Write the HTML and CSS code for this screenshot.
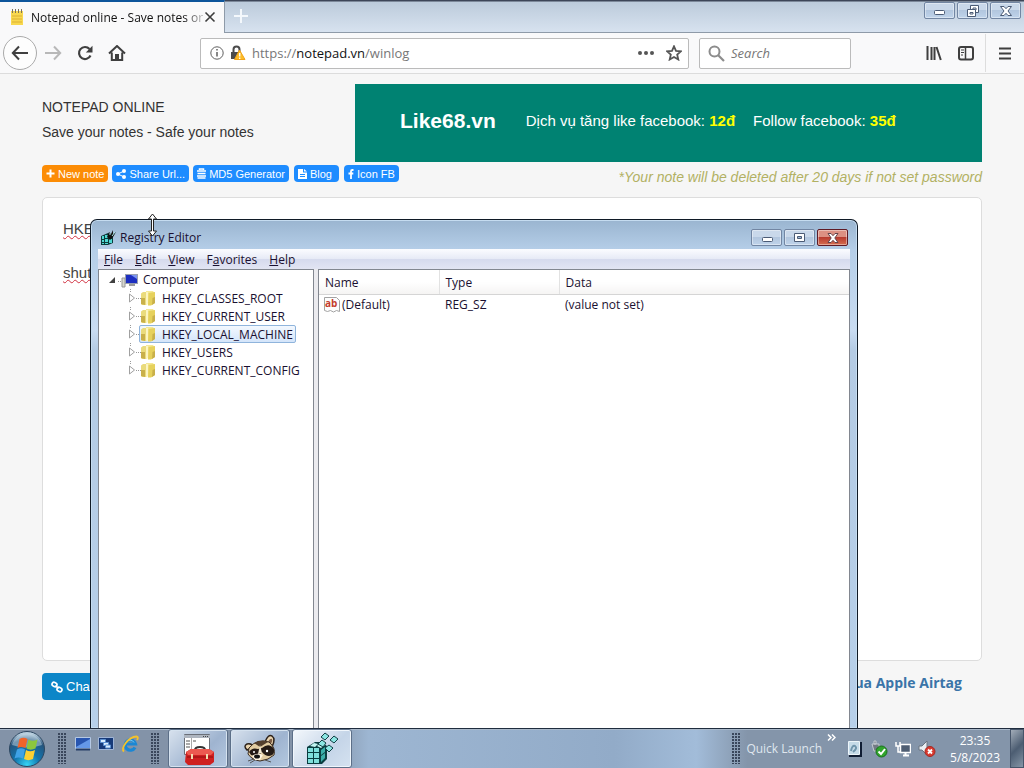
FILE: index.html
```html
<!DOCTYPE html>
<html lang="en">
<head>
    <meta charset="utf-8">
    <title>Notepad online</title>
    <link rel="stylesheet" href="styles.css">
</head>
<body>
    <svg class="defs" aria-hidden="true">
        <symbol id="folder" viewBox="0 0 16 16">
            <path d="M1 3.500 3 2h4v13H2l-1-1z" fill="#eadb7c"/>
            <path d="M6 1h7l1 1.500v11.500H6z" fill="#f4e896"/>
            <path d="M8.500 3 15 2v11l-4 2.500H8z" fill="#e6d15c"/>
            <path d="M1 8h4v7l-4-1zM12.500 8l2.500-1v6l-3 2z" fill="#c9b04a"/>
            <path d="M7 2v13" stroke="#fffad2" stroke-width="1.500"/>
        </symbol>
        <symbol id="expand" viewBox="0 0 8 10">
            <path d="M1.500 1v8L6.500 5z" fill="#fff" stroke="#a0a0a0"/>
        </symbol>
    </svg>

    <div class="browser">
        <div class="tab-strip">
            <div class="tab">
                <svg width="16" height="18" viewBox="0 0 16 18"><path d="M2 3h12v14H2z" fill="#f8d84e"/><path d="M3 8h10M3 11h10M3 14h10" stroke="#dcb032"/><path d="M3.500 1v4M6.500 1v4M9.500 1v4M12.500 1v4" stroke="#7c745a"/></svg>
                <span class="tab-title">Notepad online - Save notes or</span>
                <button class="icon-button" aria-label="Close tab"><svg width="12" height="12" viewBox="0 0 12 12"><path d="m1.500 1.500 9 9m0-9-9 9" stroke="#3c3c3c" stroke-width="1.600"/></svg></button>
            </div>
            <button class="new-tab" aria-label="New tab"><svg width="14" height="14" viewBox="0 0 14 14"><path d="M7 0v14M0 7h14" stroke="#f4f8fc" stroke-width="2"/></svg></button>
            <div class="window-buttons">
                <button aria-label="Minimize"><svg width="14" height="12" viewBox="0 0 14 12"><rect x="1.500" y="5.500" width="10" height="4" rx="1" fill="#fff" stroke="#4b5b75"/></svg></button>
                <button aria-label="Restore"><svg width="14" height="12" viewBox="0 0 14 12"><g fill="#fff" stroke="#4b5b75"><path d="M4.500.5h8v7h-8z"/><path d="M7 3h3v2H7z"/><path d="M1.500 4.500h8v7h-8z"/><path d="M4 7.500h3v1.500H4z"/></g></svg></button>
                <button aria-label="Close"><svg width="14" height="12" viewBox="0 0 14 12"><path d="M1.500 1.500h3.500l2 2.200 2-2.200h3.500L9 6l3.500 4.500H9L7 8.300 5 10.500H1.500L5 6z" fill="#fff" stroke="#4b5b75"/></svg></button>
            </div>
        </div>

        <div class="toolbar">
            <button class="nav back" aria-label="Back"><svg width="18" height="16" viewBox="0 0 18 16"><path d="M17 8H2m6-6.500L1.800 8 8 14.500" fill="none" stroke="#3f3f3f" stroke-width="2"/></svg></button>
            <button class="nav" aria-label="Forward"><svg width="18" height="16" viewBox="0 0 18 16"><path d="M1 8h15m-6-6.500L16.200 8 10 14.500" fill="none" stroke="#b8b8b8" stroke-width="2"/></svg></button>
            <button class="nav" aria-label="Reload"><svg width="16" height="16" viewBox="0 0 16 16"><path d="M13.500 10.500a6 6 0 1 1-1-6.500" fill="none" stroke="#3f3f3f" stroke-width="2.200"/><path d="M15.500.8v6.700H8.800z" fill="#3f3f3f"/></svg></button>
            <button class="nav" aria-label="Home"><svg width="18" height="16" viewBox="0 0 18 16"><path d="M1 8.500 9 1l8 7.500M3.800 7.500v7.500h10.400V7.500" fill="none" stroke="#3f3f3f" stroke-width="2"/><path d="M7 9h4v6H7z" fill="#3f3f3f"/></svg></button>
            <div class="address">
                <svg width="14" height="14" viewBox="0 0 14 14"><circle cx="7" cy="7" r="6.200" fill="none" stroke="#606060"/><path d="M7 6v4.500M7 3v1.600" stroke="#606060" stroke-width="1.500"/></svg>
                <svg width="16" height="16" viewBox="0 0 16 16"><path d="M3.500 8V4.500a3 3 0 0 1 6 0V8" fill="none" stroke="#4b4b4b" stroke-width="2"/><path d="M1 7h9v7H1z" fill="#4b4b4b"/><path d="M9.500 5 15 14.500H4.500z" fill="#fcbd28" stroke="#f2a31a"/><path d="M9.700 8v3.500m0 1v1.400" stroke="#fff" stroke-width="1.400"/></svg>
                <span class="url">https://<b>notepad.vn</b>/winlog</span>
                <button class="icon-button" aria-label="Page actions"><svg width="16" height="4" viewBox="0 0 16 4"><g fill="#555"><circle cx="2" cy="2" r="2"/><circle cx="8" cy="2" r="2"/><circle cx="14" cy="2" r="2"/></g></svg></button>
                <button class="icon-button" aria-label="Bookmark"><svg width="16" height="16" viewBox="0 0 16 16"><path d="m8 1.300 2 4.500 4.900.5-3.700 3.300 1.100 4.900L8 12l-4.300 2.500 1.100-4.900L1.100 6.300 6 5.800z" fill="none" stroke="#555" stroke-width="1.800"/></svg></button>
            </div>
            <div class="search">
                <svg width="17" height="17" viewBox="0 0 17 17"><circle cx="6.500" cy="6.500" r="5" fill="none" stroke="#8c8c8c" stroke-width="2"/><path d="m10 10 6 6" stroke="#8c8c8c" stroke-width="2.200"/></svg>
                <input type="text" placeholder="Search" aria-label="Search">
            </div>
            <div class="tools">
                <button class="icon-button" aria-label="Library"><svg width="16" height="15" viewBox="0 0 16 15"><path d="M1.500 0v14M5.500 1v13M8.500 1v13M10.500 1l4.300 13" stroke="#3f3f3f" stroke-width="2" fill="none"/></svg></button>
                <button class="icon-button" aria-label="Sidebars"><svg width="16" height="15" viewBox="0 0 16 15"><rect x="1" y="1" width="14" height="12.500" rx="2" fill="none" stroke="#3f3f3f" stroke-width="2"/><path d="M7.500 1v12" stroke="#3f3f3f" stroke-width="1.500"/><path d="M3 4h3M3 6.500h3M3 9h2" stroke="#3f3f3f"/></svg></button>
                <button class="icon-button menu" aria-label="Open menu"><svg width="12" height="13" viewBox="0 0 12 13"><path d="M0 1.500h12M0 6.500h12M0 11.500h12" stroke="#3f3f3f" stroke-width="1.800"/></svg></button>
            </div>
        </div>

        <main class="page">
            <header class="page-header">
                <div class="intro">
                    <h1>NOTEPAD ONLINE</h1>
                    <p>Save your notes - Safe your notes</p>
                </div>
                <a class="banner" href="#">
                    <strong>Like68.vn</strong>
                    <span>Dịch vụ tăng like facebook: <b>12đ</b></span>
                    <span>Follow facebook: <b>35đ</b></span>
                </a>
            </header>
            <div class="actions">
                <a class="pill new" href="#"><svg width="9" height="9" viewBox="0 0 9 9"><path d="M4.500.5v8M.5 4.500h8" stroke="#fff" stroke-width="2"/></svg>New note</a>
                <a class="pill" href="#"><svg width="10" height="10" viewBox="0 0 10 10"><g fill="#fff"><circle cx="2" cy="5" r="2"/><circle cx="8" cy="2" r="2"/><circle cx="8" cy="8" r="2"/></g><path d="M8 2 2 5l6 3" stroke="#fff" fill="none"/></svg>Share Url...</a>
                <a class="pill" href="#"><svg width="9" height="11" viewBox="0 0 9 11"><path d="M2.500 2V1h4v1M0 3h9M.5 5.500h8M0 8h9M.5 10h8" fill="none" stroke="#fff" stroke-width="1.500"/></svg>MD5 Generator</a>
                <a class="pill wide" href="#"><svg width="9" height="10" viewBox="0 0 9 10"><path d="M0 0h5v3.500h4V10H0z" fill="#fff"/><path d="M6 0v2.500h3z" fill="#fff"/><path d="M2 5.500h5M2 7.500h5" stroke="#1e8cff"/></svg>Blog</a>
                <a class="pill" href="#"><svg width="6" height="10" viewBox="0 0 6 10"><path d="M5.500 1H4.300Q3 1 3 2.300V10M.5 4.500h4.800" fill="none" stroke="#fff" stroke-width="1.800"/></svg>Icon FB</a>
                <em class="notice">*Your note will be deleted after 20 days if not set password</em>
            </div>
            <textarea class="note" aria-label="Note" spellcheck="false">HKE

shut</textarea>
            <div class="page-footer">
                <button class="change"><svg width="12" height="12" viewBox="0 0 12 12"><g fill="none" stroke="#fff" stroke-width="1.700"><rect x="1" y="1.500" width="5" height="4" rx="2" transform="rotate(25 3.500 3.500)"/><rect x="6" y="6.500" width="5" height="4" rx="2" transform="rotate(25 8.500 8.500)"/><path d="m4.500 4.500 3 3"/></g></svg>Change</button>
                <a class="shop" href="#">Mua Apple Airtag</a>
            </div>
        </main>
    </div>

    <section class="regedit">
        <div class="title-bar">
            <svg width="17" height="17" viewBox="0 0 17 17"><path d="M1 7 8 4l5 2v8l-5 2H1z" fill="#0b3b3b"/><path d="M2 7h2v3H2zM5 6h3v3H5zM2 11h2v2H2zM5 10h3v3H5zM2 14h2v1H2zM5 14h3v1H5zM9 10h3v4H9z" fill="#4fd8d2"/><path d="M7 8 9 3l2 2 2-4v4l3-2-3 5-3 3z" fill="#111"/><path d="M9 5h2M12 7l3-4" stroke="#aaeae8"/></svg>
            <h2>Registry Editor</h2>
            <div class="window-buttons">
                <button aria-label="Minimize"><svg width="14" height="12" viewBox="0 0 14 12"><rect x="2.500" y="5.500" width="10" height="4" rx="1" fill="#fff" stroke="#4b5b75"/></svg></button>
                <button aria-label="Maximize"><svg width="14" height="12" viewBox="0 0 14 12"><path d="M1.500 1.500h10v8h-10z" fill="#fff" stroke="#4b5b75"/><path d="M4.500 4.500h4v2h-4z" fill="#9fb8d6" stroke="#4b5b75"/></svg></button>
                <button class="close" aria-label="Close"><svg width="14" height="12" viewBox="0 0 14 12"><path d="M2 1.500h3l2 2.200 2-2.200h3L8.800 6l3.200 4.500H9L7 8.300 5 10.500H2L5.200 6z" fill="#fff" stroke="#63444c"/></svg></button>
            </div>
        </div>
        <nav class="menu-bar">
            <button><u>F</u>ile</button>
            <button><u>E</u>dit</button>
            <button><u>V</u>iew</button>
            <button>F<u>a</u>vorites</button>
            <button><u>H</u>elp</button>
        </nav>
        <div class="panes">
            <div class="tree">
                <div class="root">
                    <svg width="32" height="16" viewBox="0 0 32 16"><path d="M8 5v6H2z" fill="#404040"/><path d="M11 9.500h5" stroke="#999" stroke-dasharray="1 1"/><path d="M15 6h3v9h-3z" fill="#d8d8cf" stroke="#999"/><rect x="18.500" y="2.500" width="12" height="9" fill="#1d2fc0" stroke="#9aa0b0"/><path d="M24 3h6v4z" fill="#7d95f0"/><path d="M22 12h6v2h-6z" fill="#9a9a9a"/></svg>
                    Computer
                </div>
                <ul>
                    <li><svg class="expand"><use href="#expand"/></svg><span class="key"><svg class="folder"><use href="#folder"/></svg>HKEY_CLASSES_ROOT</span></li>
                    <li><svg class="expand"><use href="#expand"/></svg><span class="key"><svg class="folder"><use href="#folder"/></svg>HKEY_CURRENT_USER</span></li>
                    <li><svg class="expand"><use href="#expand"/></svg><span class="key selected"><svg class="folder"><use href="#folder"/></svg>HKEY_LOCAL_MACHINE</span></li>
                    <li><svg class="expand"><use href="#expand"/></svg><span class="key"><svg class="folder"><use href="#folder"/></svg>HKEY_USERS</span></li>
                    <li><svg class="expand"><use href="#expand"/></svg><span class="key"><svg class="folder"><use href="#folder"/></svg>HKEY_CURRENT_CONFIG</span></li>
                </ul>
            </div>
            <div class="values">
                <table>
                    <thead>
                        <tr><th class="col">Name</th><th class="col">Type</th><th>Data</th></tr>
                    </thead>
                    <tbody>
                        <tr>
                            <td class="name"><span><svg width="16" height="16" viewBox="0 0 16 16"><path d="M.5.500h12l3 3v11l-3-1-3 1.500-3-1.500-3 1-3-1z" fill="#fdfdfd" stroke="#a3a3a3"/><text x="1" y="10" class="ab">ab</text></svg>(Default)</span></td>
                            <td>REG_SZ</td>
                            <td>(value not set)</td>
                        </tr>
                    </tbody>
                </table>
            </div>
        </div>
    </section>

    <svg class="cursor" width="11" height="24" viewBox="0 0 11 24"><path d="M5.500 1 9.500 6h-3v12h3l-4 5-4-5h3V6h-3z" fill="#fff" stroke="#222"/></svg>

    <footer class="taskbar">
        <button class="start" aria-label="Start">
            <svg width="38" height="38" viewBox="0 0 38 38">
                <defs>
                    <radialGradient id="orb" cx=".5" cy=".95" r=".9"><stop offset="0" stop-color="#35d5f5"/><stop offset=".4" stop-color="#1276ae"/><stop offset=".8" stop-color="#25547d"/><stop offset="1" stop-color="#b9cfdf"/></radialGradient>
                </defs>
                <circle cx="19" cy="19" r="17.500" fill="url(#orb)" stroke="#2c4660"/>
                <path d="M4 15a15.500 15.500 0 0 1 30 0Q19 20 4 15z" fill="#d8e8f2" opacity=".45"/>
                <path d="M11.500 9q4-2.500 8 0l-2 9q-4.500-2-8 0z" fill="#f0642a"/>
                <path d="M20.500 9.500q4 2.500 9 0l-2 9q-5 2.300-9 0z" fill="#8cc63e"/>
                <path d="M9 19.500q4-2.500 8 0l-2 9q-4.500-2-8.500 0z" fill="#3fa2e6"/>
                <path d="M18 20q4 2.500 9 0l-2 9q-5 2.300-9 0z" fill="#fcd033"/>
            </svg>
        </button>
        <span class="grip first"></span>
        <div class="quick">
            <button aria-label="Show desktop"><svg width="16" height="14" viewBox="0 0 16 14"><path d="M.5.500h15v11H.5z" fill="#2855b0" stroke="#b4c8e4"/><path d="M1 10 15 2v9H1z" fill="#6598e8"/><path d="M1 11.500h14v2H1z" fill="#253c66"/></svg></button>
            <button aria-label="Switch windows"><svg width="16" height="14" viewBox="0 0 16 14"><path d="M.5.500h15v12H.5z" fill="#173a79" stroke="#9eb4d6"/><g fill="#d9edff" stroke="#5b8fd0"><path d="M2.500 2.500h5v3h-5z"/><path d="M5.500 5.500h5v3h-5z"/><path d="M7.500 8h5v3h-5z"/></g></svg></button>
            <button aria-label="Internet Explorer"><svg width="18" height="18" viewBox="0 0 18 18"><path d="M14 12.500a5.200 5.200 0 1 1 .5-3.500H5" fill="none" stroke="#1b87d4" stroke-width="3.200"/><path d="M5 7.500a4.500 4.500 0 0 1 8 0" fill="none" stroke="#77cbf5"/><path d="M3 16.500C-1 14 7 2 15.500 1.500c2 .3 1.500 2 .5 3.500" fill="none" stroke="#f3c22b" stroke-width="1.800"/></svg></button>
        </div>
        <span class="grip"></span>
        <div class="tasks">
            <button class="task" aria-label="Toolbox">
                <svg width="34" height="34" viewBox="0 0 34 34"><path d="M3.500 2.500h25v20h-25z" fill="#fff" stroke="#6a6f78"/><path d="M3 3h26v3H3z" fill="#aeb5bf"/><path d="M22 4.500h6" stroke="#444" stroke-dasharray="1 1"/><path d="M10.500 6v16" stroke="#aaa"/><path d="M5 9h4M5 12h4M5 15h4M12 9h3" stroke="#555"/><path d="M14 18q0-3 5-3t5 3" fill="none" stroke="#333" stroke-width="2"/><path d="m5 20 5-3h18l5 3v10l-4 3H7l-3-3z" fill="#cf2020"/><path d="m5 20 5-3h18l5 3-3 3H7z" fill="#ec5a50"/><path d="M6 25h26" stroke="#8e1010"/><path d="M11 22v5M26 22v5" stroke="#f0dfb0" stroke-width="2"/></svg>
            </button>
            <button class="task" aria-label="Raccoon">
                <svg width="34" height="30" viewBox="0 0 34 30"><path d="M22 8q3-8 7-6 4 3 0 11z" fill="#e9d4ae" stroke="#2c211a" stroke-width="1.500"/><path d="M25 8q2-4 4-3 1 2-1 5z" fill="#7c5c45"/><path d="M4 16Q0 12 4 10q5-1 7 3z" fill="#e9d4ae" stroke="#2c211a" stroke-width="1.500"/><path d="M6 14Q14 4 26 8q7 6 5 13-5 5-14 6-8-1-12-7z" fill="#e3cda2" stroke="#3a2b20"/><path d="M11 9q9-4 14-1l-8 5z" fill="#54402e"/><path d="M6 18q3-5 9-3l4-1q7-6 12 1 1 7-5 7-4 0-7-4-4 6-11 3z" fill="#241a15"/><path d="m17 11-2 9 4-1z" fill="#f4ead2"/><path d="M9 22q5-4 11-1l-3 5h-5z" fill="#fff4df"/><ellipse cx="14" cy="22.500" rx="3" ry="2" fill="#111"/><circle cx="11" cy="18" r="1" fill="#fff"/><circle cx="24" cy="17" r="1.200" fill="#fff"/><path d="m5 27 6-2M28 28l-6-2M7 29l5-3" stroke="#555"/></svg>
            </button>
            <button class="task active" aria-label="Registry Editor">
                <svg width="34" height="34" viewBox="0 0 34 34"><path d="m2 15 8-5h6l6 4v13l-5 5H2z" fill="#093d40"/><g fill="#7fe0dc"><path d="M3 16h5v4H3zM9 16h5v4H9zM3 21h5v5H3zM9 21h5v5H9zM3 27h5v4H3zM9 27h5v4H9z"/><path d="m5 14 4-3 4 1-3 3zM12 14l3-3 5 2-4 3z" fill="#c4f6f2"/><path d="m16 18 4-3v5l-4 3zM16 24l4-3v5l-4 4z" fill="#3aaea9"/></g><g fill="#8be6e2" stroke="#123f44"><path d="m20 1 4 3-4 4-4-3z"/><path d="m29 4 4 3-4 4-4-3z"/><path d="m24 13 4 3-4 4-4-4z"/><path d="m17 8 4 3-3 4-5-3z"/></g></svg>
            </button>
        </div>
        <div class="tray">
            <span class="grip"></span>
            <span class="quick-label">Quick Launch</span>
            <button class="more" aria-label="More"><svg width="9" height="7" viewBox="0 0 9 7"><path d="m1 .5 3 3-3 3m4-6 3 3-3 3" fill="none" stroke="#fff" stroke-width="1.500"/></svg></button>
            <div class="tray-icons">
                <svg width="16" height="16" viewBox="0 0 16 16"><path d="M3 1h12v15H2z" fill="#101d33"/><path d="M1.500.500h11v13h-11z" fill="#c6dbe8" stroke="#edf5fa"/><path d="M4 10q1-6 4-5 3 2-2 6" fill="none" stroke="#7095ac" stroke-width="2"/></svg>
                <svg width="18" height="18" viewBox="0 0 18 18"><path d="M2 4h7v7H4zM4 1h2v3H4z" fill="#737b84" stroke="#c5cbd1"/><circle cx="11.500" cy="11.500" r="5.500" fill="#31a52d" stroke="#18701b"/><path d="m8.500 11.500 2.500 2.500 4-5" fill="none" stroke="#fff" stroke-width="2"/></svg>
                <svg width="16" height="16" viewBox="0 0 16 16"><path d="M5.500 3.500h10v8h-10z" fill="#4f5e73" stroke="#fff" stroke-width="1.500"/><path d="M8 14.500h6M10.500 12v2" stroke="#fff" stroke-width="2"/><path d="M1 1v4h4V1M3 5v6h3" fill="none" stroke="#fff" stroke-width="1.500"/></svg>
                <svg width="18" height="18" viewBox="0 0 18 18"><path d="M1 6h3l5-5v14l-5-5H1z" fill="#e9eef2" stroke="#6a7480"/><circle cx="12" cy="11.500" r="5" fill="#d8392f" stroke="#a52822"/><path d="m10 9.500 4 4m0-4-4 4" stroke="#fff" stroke-width="1.800"/></svg>
            </div>
            <div class="clock"><span>23:35</span><span>5/8/2023</span></div>
            <button class="show-desktop" aria-label="Show desktop"></button>
        </div>
    </footer>
</body>
</html>
```
FILE: styles.css
```css
* {
    box-sizing: border-box;
}

body {
    margin: 0;
    height: 100vh;
    display: flex;
    flex-direction: column;
    overflow: hidden;
    background: #f6f6f6;
    color: #333;
    font-family: "Open Sans", "Noto Sans", sans-serif;
    font-size: 12px;
}

button {
    margin: 0;
    padding: 0;
    border: none;
    background: none;
    font: inherit;
    color: inherit;
}

svg {
    display: block;
    flex: none;
}

a {
    text-decoration: none;
}

.defs {
    position: absolute;
    width: 0;
    height: 0;
}

.browser {
    flex: 1;
    min-height: 0;
    display: flex;
    flex-direction: column;
}

/* Tabs */
.tab-strip {
    display: flex;
    height: 33px;
    border-bottom: 1px solid #8e9aa8;
    background: linear-gradient(#3d4658 1px, #bccbdb 2px, #d7e2ef);
}

.tab {
    display: flex;
    align-items: center;
    width: 225px;
    margin-bottom: -1px;
    padding: 0 8px 1px 9px;
    border-top: 2px solid #0d559b;
    border-right: 1px solid #8e9aa8;
    background: #f9f9fa;
    color: #111;
}

.tab-title {
    flex: 1;
    margin-left: 6px;
    white-space: nowrap;
    -webkit-mask-image: linear-gradient(to right, #000 88%, rgba(0, 0, 0, .2));
    mask-image: linear-gradient(to right, #000 88%, rgba(0, 0, 0, .2));
}

.new-tab {
    padding: 0 9px;
}

.window-buttons {
    display: flex;
    gap: 2px;
    margin-left: auto;
}

.window-buttons button {
    display: flex;
    align-items: center;
    justify-content: center;
    width: 31px;
    height: 17px;
    border: 1px solid #7286a3;
    border-radius: 2px;
    background: linear-gradient(#c9d8ea 50%, #b2c6de 50%, #bfd3ea);
    box-shadow: inset 0 0 0 1px rgba(255, 255, 255, .4);
}

.tab-strip .window-buttons {
    padding: 2px 3px 0 0;
}

.window-buttons .close {
    border-color: #5e1a25;
    background: linear-gradient(#dc9083 50%, #b83c30 50%, #d56e50);
}

/* Toolbar */
.toolbar {
    display: flex;
    align-items: center;
    height: 41px;
    padding-left: 3px;
    border-bottom: 1px solid #dcdcdc;
    background: #f9f9fa;
}

.nav {
    display: flex;
    align-items: center;
    justify-content: center;
    width: 32px;
    height: 34px;
}

.back {
    width: 34px;
    border: 1px solid #aaa;
    border-radius: 50%;
    background: #fdfdfd;
}

.address,
.search {
    display: flex;
    align-items: center;
    height: 31px;
    border: 1px solid #bbb;
    border-radius: 2px;
    background: #fff;
    font-size: 13px;
}

.address {
    flex: 1;
    gap: 6px;
    margin-left: 67px;
    padding: 0 6px 0 9px;
}

.url {
    flex: 1;
    color: #777;
}

.url b {
    color: #111;
    font-weight: normal;
}

.icon-button {
    display: flex;
    align-items: center;
}

.address .icon-button {
    margin-left: 6px;
}

.search {
    width: 152px;
    margin-left: 10px;
    padding-left: 8px;
    gap: 6px;
}

.search input {
    width: 100%;
    min-width: 0;
    padding: 0;
    border: none;
    outline: none;
    background: none;
    font: italic 13px "Open Sans", sans-serif;
}

.search input::placeholder {
    color: #777;
}

.tools {
    display: flex;
    gap: 16px;
    margin-left: 75px;
}

.menu {
    height: 38px;
    padding: 0 13px;
    margin-left: -5px;
    border-left: 1px solid #ddd;
}

/* Page */
.page {
    flex: 1;
    display: flex;
    flex-direction: column;
    min-height: 0;
    padding: 10px 42px 28px;
    font-family: "Liberation Sans", Arial, sans-serif;
}

.page-header {
    display: flex;
    justify-content: space-between;
}

.intro {
    padding-top: 11px;
}

.intro h1,
.intro p {
    margin: 0;
    font-size: 14px;
    line-height: 25px;
    font-weight: normal;
}

.banner {
    display: flex;
    align-items: center;
    width: 66.7%;
    height: 78px;
    padding: 0 45px 5px;
    background: #008272;
    color: #fff;
    font-size: 15px;
    white-space: nowrap;
}

.banner strong {
    margin-right: 30px;
    font-size: 21px;
}

.banner span {
    margin-right: 18px;
}

.banner b {
    color: #ff0;
}

.actions {
    display: flex;
    align-items: flex-start;
    gap: 4px;
    height: 35px;
    padding-top: 3px;
}

.pill {
    display: flex;
    align-items: center;
    gap: 3px;
    height: 17px;
    padding: 0 4px;
    border-radius: 4px;
    background: #1e8cff;
    color: #fff;
    font-size: 11px;
    white-space: nowrap;
}

.pill.new {
    background: #fc8c05;
}

.pill.wide {
    padding-right: 7px;
    margin: 0 1px;
}

.notice {
    margin-left: auto;
    color: #b2b163;
    font-size: 14px;
    line-height: 24px;
}

.note {
    flex: 1;
    padding: 20px;
    border: 1px solid #ddd;
    border-radius: 5px;
    outline: none;
    resize: none;
    background: #fff;
    color: #444;
    font: 15px/22px "Liberation Sans", Arial, sans-serif;
    text-decoration: underline wavy #d03040 1px;
}

.page-footer {
    display: flex;
    justify-content: space-between;
    align-items: flex-start;
    padding: 12px 20px 0 0;
}

.change {
    display: flex;
    align-items: center;
    gap: 3px;
    height: 27px;
    padding: 0 9px;
    border-radius: 4px;
    background: #0c86c8;
    color: #fff;
    font-size: 13px;
}

.shop {
    color: #3a74a8;
    font: bold 14px/20px "Open Sans", sans-serif;
}

/* Registry Editor window */
.regedit {
    position: absolute;
    top: 219px;
    left: 90px;
    bottom: 40px;
    display: flex;
    flex-direction: column;
    width: 768px;
    padding: 0 7px;
    border: 1px solid #101a26;
    border-bottom: none;
    border-radius: 7px 7px 0 0;
    background: linear-gradient(#9ab5d0, #b5cee8 30px, #c9dcf2 110px, #b4cbe4 130px, #b7d0ea);
    box-shadow: inset 0 0 0 1px #c5dcf0;
    color: #1a1030;
}

.title-bar {
    display: flex;
    align-items: center;
    height: 29px;
    padding: 6px 2px 0;
}

.title-bar h2 {
    margin: 0 0 0 3px;
    font-size: 12px;
    font-weight: normal;
}

.menu-bar {
    display: flex;
    gap: 12px;
    height: 20px;
    padding: 0 6px;
    background: linear-gradient(#fbfcff, #e6eaf6 50%, #d5daed 50%, #e2e5f3);
}

.panes {
    flex: 1;
    display: flex;
    gap: 4px;
    min-height: 0;
    background: #ebebef;
}

.tree,
.values {
    border: 1px solid #828790;
    border-bottom: none;
    background: #fff;
}

.tree {
    width: 216px;
    padding-left: 8px;
}

.root {
    display: flex;
    align-items: center;
    gap: 4px;
    height: 19px;
}

.tree ul {
    margin: 0;
    padding: 0 0 0 21px;
    list-style: none;
}

.tree li {
    display: flex;
    align-items: center;
    height: 18px;
    background:
        repeating-linear-gradient(to right, #999 0 1px, transparent 1px 2px) 8px 50% / 6px 1px no-repeat,
        repeating-linear-gradient(#999 0 1px, transparent 1px 2px) 2px 0 / 1px 4px no-repeat;
}

.expand {
    width: 8px;
    height: 10px;
    margin-right: 3px;
}

.key {
    display: flex;
    align-items: center;
    gap: 6px;
    height: 18px;
    padding-right: 2px;
    border: 1px solid transparent;
}

.key.selected {
    border-color: #8fb4dc;
    border-radius: 2px;
    background: linear-gradient(#f3f8fe, #d4e5fa);
}

.folder {
    width: 16px;
    height: 16px;
}

.values {
    flex: 1;
}

table {
    width: 100%;
    border-collapse: collapse;
    table-layout: fixed;
}

th,
td {
    padding: 0 6px;
    font-weight: normal;
    text-align: left;
}

th {
    height: 24px;
    padding-top: 2px;
    border-bottom: 1px solid #d5d5d5;
    background: linear-gradient(#fff 50%, #f5f4f3);
}

th.col {
    width: 120px;
    border-right: 1px solid #e2e2e2;
}

td {
    height: 21px;
}

td.name {
    padding-left: 5px;
}

td.name span {
    display: flex;
    align-items: center;
    gap: 2px;
}

.ab {
    fill: #c43d2e;
    font: bold 10px "Open Sans", sans-serif;
}

.cursor {
    position: absolute;
    top: 213px;
    left: 147px;
}

/* Taskbar */
.taskbar {
    z-index: 1;
    display: flex;
    align-items: center;
    height: 40px;
    padding-left: 8px;
    border-top: 1px solid #1f2c3e;
    background: linear-gradient(to right, #8393a8 32%, #9db6d2 36%, #92abc8 60%, #a2bcd9 68%, #8495aa 73%);
    box-shadow: inset 0 1px 0 #aab9ca;
    color: #fff;
}

.grip {
    width: 9px;
    height: 31px;
    background: radial-gradient(circle at 1px 1px, #3a475c 1px, transparent 1px) 0 0 / 3px 3px;
}

.grip.first {
    margin-left: 12px;
}

.quick {
    display: flex;
    align-items: center;
    gap: 7px;
    margin: 0 12px 10px 8px;
}

.tasks {
    display: flex;
    align-self: stretch;
    gap: 2px;
    margin-left: 8px;
}

.task {
    display: flex;
    align-items: center;
    justify-content: center;
    width: 60px;
    border: 1px solid #5c6f88;
    border-radius: 3px;
    background: linear-gradient(135deg, #d8e2ee, #9fb4d0 60%, #b4c8e0);
    box-shadow: inset 0 0 0 1px #d5e2ef;
}

.task.active {
    background: linear-gradient(135deg, #f4f8fc, #c5d5e8 60%, #d5e2f0);
    box-shadow: inset 0 0 0 1px #f0f6fc;
}

.tray {
    display: flex;
    align-items: center;
    align-self: stretch;
    margin-left: auto;
}

.quick-label {
    margin-left: 5px;
    color: #dfe6ee;
}

.more {
    margin: 0 11px 22px 5px;
}

.tray-icons {
    display: flex;
    align-items: center;
    gap: 7px;
}

.clock {
    display: flex;
    flex-direction: column;
    align-items: center;
    margin: 0 10px 0 14px;
    line-height: 17px;
}

.show-desktop {
    align-self: stretch;
    width: 14px;
    border: 1px solid #46556a;
    background: linear-gradient(135deg, #a3adb9, #4c5d72 50%, #8595a6);
}
```
